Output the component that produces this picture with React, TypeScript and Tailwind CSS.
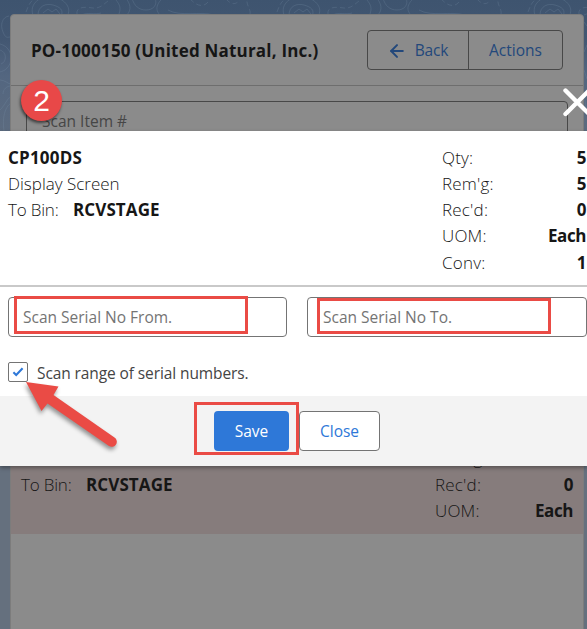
import { ArrowLeft } from "lucide-react";

type Row = { label: string; value: string };

const rows: Row[] = [
  { label: "Qty:", value: "5" },
  { label: "Rem'g:", value: "5" },
  { label: "Rec'd:", value: "0" },
  { label: "UOM:", value: "Each" },
  { label: "Conv:", value: "1" },
];

function Details({ items }: { items: Row[] }) {
  return (
    <div className="text-[17px]">
      {items.map((x) => (
        <div key={x.label} className="flex h-[26.2px] items-center justify-between">
          <span className="font-light tracking-[0.2px]">{x.label}</span>
          <span className="font-bold tracking-[-0.4px]">{x.value}</span>
        </div>
      ))}
    </div>
  );
}

function ToBin() {
  return (
    <div className="flex h-[26px] items-center text-[17px]">
      <span className="w-[65px] font-light tracking-[-0.2px]">To Bin:</span>
      <span className="font-bold tracking-[0.1px]">RCVSTAGE</span>
    </div>
  );
}

// contour lines behind the card
function Contours() {
  return (
    <svg className="absolute inset-0 h-full w-full" viewBox="0 0 587 629" fill="none" stroke="#7890a8" strokeOpacity="0.33" strokeWidth="0.8">
      <defs>
        <g id="contour">
          <path d="M33 15C29 4 40 -5 53 -3S72 9 67 16" />
          <path d="M38 15c0-9 8-12 15-10s11 5 8 11M43 13l5-4 4 3 4-3 4 5" />
          <path d="M77 14c-1-8 9-7 16-6s12-5 15-7" strokeDasharray="5 3" />
          <path d="M82 15c5-3 13 0 19-2M127 15c5-6 3-11-1-17M119 14c2-6 1-9-3-14" />
          <path d="M132-2c2 8 7 12 14 12s12-5 9-12M160 15c-8-8 2-16 3-17M168 10c12 7 32 1 46 5" />
          <path d="M190-1c5 5 12 10 18 3M226-1c7 8 12 4 14 0" strokeDasharray="5 3" />
          <path d="M250 14c1-5-4-9-3-15M26 12c2-5 3-9 8-13" strokeDasharray="5 3" />
        </g>
      </defs>
      <use href="#contour" />
      <use href="#contour" x="251" />
      <use href="#contour" x="502" />
      <path d="M9 16C2 17 0 25 3 32s4 5 8 5M0 50c7 2 7 12 1 14M0 44c12 3 14 17 7 24-2 3-5 3-7 4M0 80c5 0 8 4 11 4M3 94c0-5 4-8 8-8M0 110c6-6 7-12 11-13M4 131c-2-14 1-24 7-28" />
      <path d="M584 22l3 4M584 52l3-7M584 70l3 9M585 100l2 14" />
    </svg>
  );
}

function Check() {
  return (
    <svg width="12" height="10" viewBox="0 0 12 10" fill="none" stroke="#2e78d8" strokeWidth="2.1">
      <path d="M1.4 5.2l2.8 2.7L10.6 1.3" />
    </svg>
  );
}

function App() {
  return (
    <div className="relative h-[629px] w-full overflow-hidden bg-[#65707e] bg-[linear-gradient(#3e546f_0px,#435772_40px,#536680_75px,#65707e_190px)] font-['Open_Sans','Noto_Sans',sans-serif] text-[15.5px] text-[#161616]">
      <Contours />

      <div className="relative mt-3.5 mr-[3px] ml-2.5 flex h-[640px] flex-col rounded-t border border-[#7c7c7c] bg-[#8b8b8b]">
        <div className="flex h-[71px] shrink-0 items-center justify-between border-b border-[#6e6e6e] pr-5 pl-5">
          <h1 className="whitespace-nowrap pt-0.5 text-[17px] font-bold tracking-[0.2px]">PO-1000150 (United Natural, Inc.)</h1>
          <div className="flex h-10 rounded border border-[#484848] text-[#23487b]">
            <button className="flex w-[101px] items-center justify-center gap-2 border-r border-[#484848] pt-0.5 pr-px">
              <ArrowLeft size={20} strokeWidth={2.4} />
              <span className="tracking-[-0.2px]">Back</span>
            </button>
            <button className="w-[93px] pt-0.5">Actions</button>
          </div>
        </div>

        <div className="mt-[15px] mr-[15px] ml-[15px] flex h-10 shrink-0 items-center rounded border border-[#484848] pt-0.5 pl-[15px] text-[#464646]">
          Scan Item #
        </div>

        <div className="mt-[259px] flex h-[134px] shrink-0 justify-between bg-[#867c7c] pr-2.5 pl-2.5 pt-[45px]">
          <div className="pt-[27px]">
            <ToBin />
          </div>
          <div className="w-[138px]">
            <Details items={rows.slice(1, 4)} />
          </div>
        </div>
      </div>

      <div className="absolute top-[131px] left-0 h-[335px] w-[587px] bg-white shadow-[0_2px_4px_rgba(0,0,0,0.35)]">
        <div className="flex h-[156px] justify-between border-b-2 border-[#c9c9c9] pt-3.5 pl-2">
          <div className="text-[17px]">
            <div className="flex h-[26px] items-center font-bold tracking-[0.2px]">CP100DS</div>
            <div className="flex h-[26px] items-center font-light">Display Screen</div>
            <ToBin />
          </div>
          <div className="-mt-[0.6px] w-[145px] pr-px">
            <Details items={rows} />
          </div>
        </div>

        <div className="flex h-[109px] flex-col pt-2.5 pl-2">
          <div className="flex gap-5 text-[#747474]">
            <div className="flex h-10 w-[279px] items-center rounded border border-[#747474] pt-px pl-3.5">Scan Serial No From.</div>
            <div className="flex h-10 w-[280px] items-center rounded border border-[#747474] pt-px pl-[15px]">Scan Serial No To.</div>
          </div>
          <div className="mt-[25px] flex h-5 items-center text-[#444]">
            <span className="mr-[9px] flex size-5 items-center justify-center rounded-xs border border-[#747474]">
              <Check />
            </span>
            <span className="pt-[3px] tracking-[-0.1px]">Scan range of serial numbers.</span>
          </div>
        </div>

        <div className="flex h-[70px] items-center justify-center gap-2.5 bg-[#f3f3f3] pl-[7px]">
          <button className="h-10 w-[75px] rounded bg-[#2e78d8] pt-0.5 text-white">Save</button>
          <button className="h-10 w-[81px] rounded border border-[#747474] bg-white pt-0.5 text-[#2e78d8]">Close</button>
        </div>
      </div>

      {/* close icon */}
      <svg className="absolute top-[87px] left-[562px]" width="30" height="30" viewBox="0 0 30 30" stroke="#fff" strokeWidth="4.4" strokeLinecap="round">
        <path d="M3.5 3.5L27 27M27 3.5L3.5 27" />
      </svg>

      {/* callouts */}
      <div className="absolute top-[80px] left-[21px] flex size-[41px] items-center justify-center rounded-full bg-[#e84848] font-['Liberation_Sans',sans-serif] text-[30px] leading-none text-white shadow-[-1px_2px_3px_rgba(0,0,0,0.55)]">
        2
      </div>
      <div className="absolute top-[296px] left-[14px] h-[38px] w-[234px] border-3 border-[#ea4b45]" />
      <div className="absolute top-[298px] left-[317px] h-9 w-[234px] border-3 border-[#ea4b45]" />
      <div className="absolute top-[402px] left-[194px] h-[53px] w-[105px] border-3 border-[#ea4b45]" />
      <svg className="absolute top-[378px] left-[22px] drop-shadow-[-1px_3px_2px_rgba(0,0,0,0.4)]" width="100" height="74" viewBox="0 0 100 74" fill="#ea4b45">
        <path d="M4 4L36.5 8.5L31.5 17L92.5 59.5A5 5 0 0 1 87 68L25.5 25.5L19.5 33Z" />
      </svg>
    </div>
  );
}

export default App;
